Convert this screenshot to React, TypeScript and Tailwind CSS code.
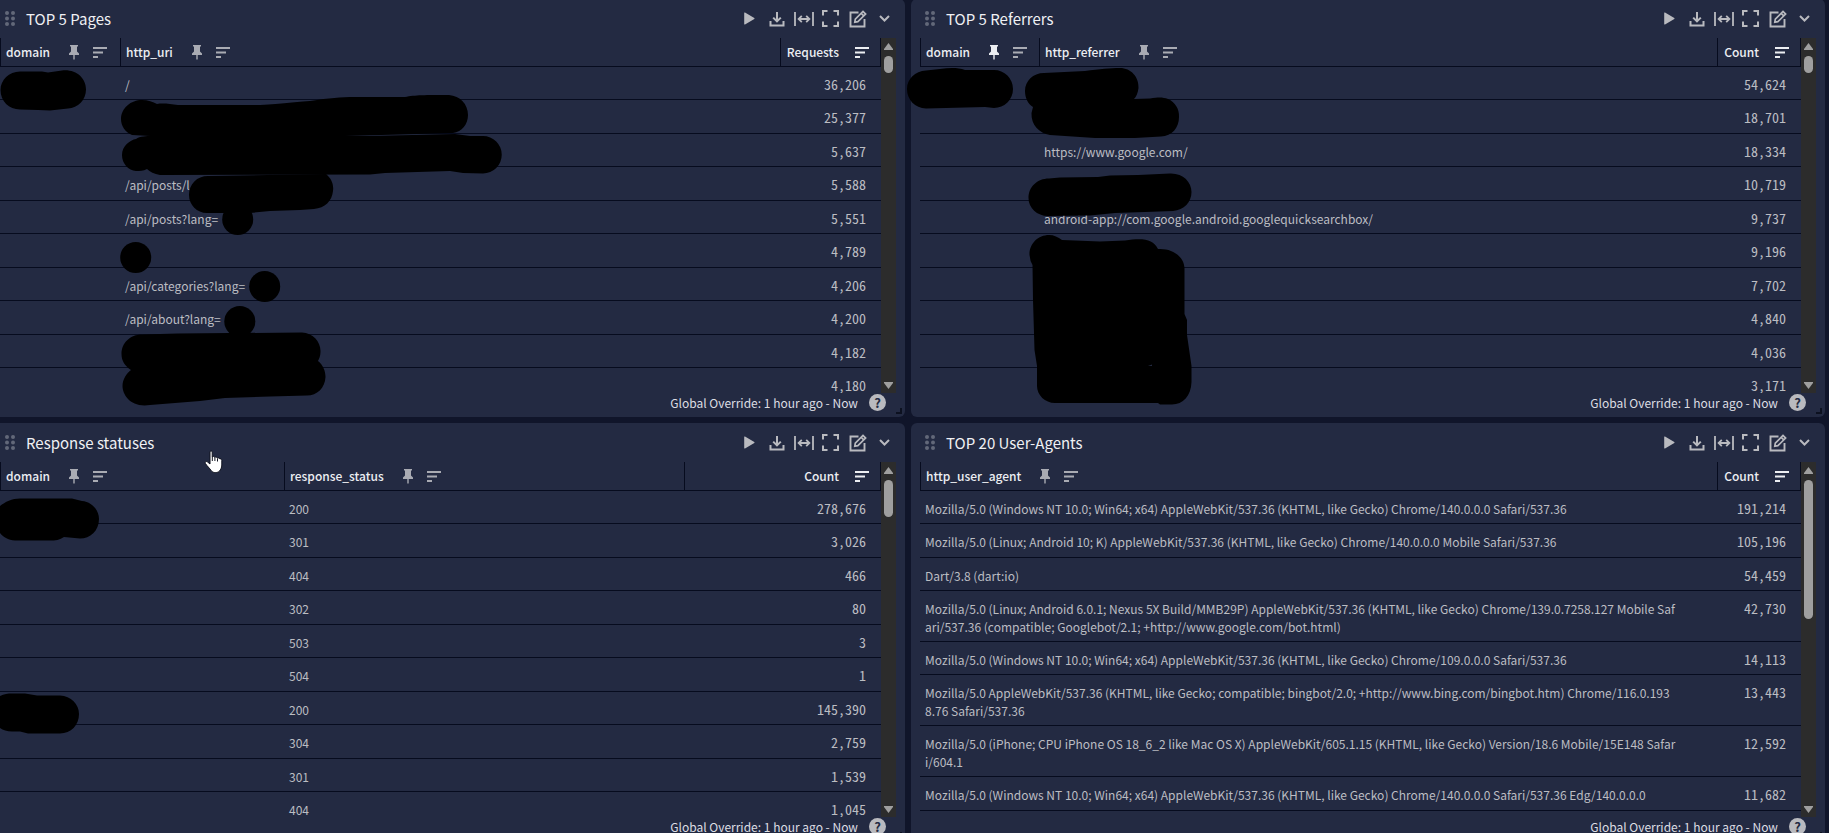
import React from "react";

type Column = { label: string; numeric?: boolean; pinned?: boolean; width?: string };
type PanelProps = {
  title: string;
  columns: Column[];
  rows: string[][];
  thumb: string;
};

const iconButton = "flex h-6 w-[27px] items-center justify-center text-[#b9babf]";

function GripIcon() {
  return (
    <svg width="10" height="15" viewBox="0 0 10 15" fill="#626879" aria-hidden="true">
      <circle cx="2" cy="2" r="2" />
      <circle cx="8" cy="2" r="2" />
      <circle cx="2" cy="7.5" r="2" />
      <circle cx="8" cy="7.5" r="2" />
      <circle cx="2" cy="13" r="2" />
      <circle cx="8" cy="13" r="2" />
    </svg>
  );
}

function PinIcon() {
  return (
    <svg width="10" height="15" viewBox="0 0 10 15" fill="currentColor" aria-hidden="true">
      <path d="M1 0H9V1.5H8V6.5L10 8.5V10H5.7V14L5 15L4.3 14V10H0V8.5L2 6.5V1.5H1Z" />
    </svg>
  );
}

function SortIcon() {
  return (
    <svg width="14" height="11" viewBox="0 0 14 11" fill="currentColor" aria-hidden="true">
      <path d="M0 0H14V2H0ZM0 4.5H10V6.5H0ZM0 9H5V11H0Z" />
    </svg>
  );
}

function Toolbar() {
  return (
    <div className="-mr-0.5 flex shrink-0">
      <button type="button" aria-label="Run" className={iconButton}>
        <svg width="11" height="13" viewBox="0 0 11 13" fill="currentColor">
          <path d="M1 .5 10.3 6.1a.5.5 0 0 1 0 .8L1 12.5a.5.5 0 0 1-.8-.4V.9A.5.5 0 0 1 1 .5Z" />
        </svg>
      </button>
      <button type="button" aria-label="Download" className={iconButton}>
        <svg width="16" height="16" viewBox="0 0 16 16" fill="none" stroke="currentColor" strokeWidth="2">
          <path d="M8 1V10M4.2 6.6 8 10.4 11.8 6.6M1.5 10V14.4H14.5V10" />
        </svg>
      </button>
      <button type="button" aria-label="Fit width" className={iconButton}>
        <svg width="20" height="16" viewBox="0 0 20 16" fill="none" stroke="currentColor" strokeWidth="1.8">
          <path d="M1 1V15M19 1V15M5 8H15M7.8 4.8 4.6 8 7.8 11.2M12.2 4.8 15.4 8 12.2 11.2" />
        </svg>
      </button>
      <button type="button" aria-label="Full screen" className={iconButton}>
        <svg width="17" height="17" viewBox="0 0 17 17" fill="none" stroke="currentColor" strokeWidth="2">
          <path d="M1 5.5V1H5.5M11.5 1H16V5.5M16 11.5V16H11.5M5.5 16H1V11.5" />
        </svg>
      </button>
      <button type="button" aria-label="Edit" className={iconButton}>
        <svg width="18" height="18" viewBox="0 0 18 18" fill="none" stroke="currentColor" strokeWidth="1.9">
          <path d="M9.5 2.5H1.5V16.5H15.5V9" />
          <path d="M5.8 12.2 6.3 9.2 14 1.5 16.6 4.1 8.9 11.7ZM12.2 3.3 14.8 5.9" strokeWidth="1.7" />
        </svg>
      </button>
      <button type="button" aria-label="More" className={iconButton}>
        <svg width="11" height="7" viewBox="0 0 11 7" fill="none" stroke="currentColor" strokeWidth="2">
          <path d="M1 1 5.5 5.5 10 1" />
        </svg>
      </button>
    </div>
  );
}

function Scrollbar({ thumb }: { thumb: string }) {
  return (
    <div className="flex w-[15px] shrink-0 flex-col items-center justify-between bg-[#2c2c2c] pt-[5px] pb-1">
      <div className="flex flex-col items-center gap-[6px]">
        <svg width="9" height="7" viewBox="0 0 9 7" fill="#9f9f9f" aria-hidden="true">
          <path d="M4.5 0 9 6V7H0V6Z" />
        </svg>
        <div className={`w-[9px] rounded-full bg-[#9f9f9f] ${thumb}`} />
      </div>
      <svg width="9" height="7" viewBox="0 0 9 7" fill="#9f9f9f" aria-hidden="true">
        <path d="M4.5 7 9 1V0H0V1Z" />
      </svg>
    </div>
  );
}

function Panel({ title, columns, rows, thumb }: PanelProps) {
  return (
    <section className="relative flex h-[418px] min-w-0 flex-col rounded-md bg-[#232a42] px-[9px]">
      <header className="flex h-[39px] shrink-0 items-center justify-between">
        <div className="flex items-center gap-[11px] pl-[5px]">
          <GripIcon />
          <h2 className="text-[15px] leading-5 text-[#f0f1f4]">{title}</h2>
        </div>
        <Toolbar />
      </header>
      <div className="flex h-[355px] overflow-hidden">
        <div className="min-w-0 flex-1 overflow-hidden">
          <table className="w-full table-fixed border-separate border-spacing-0">
            <thead>
              <tr className="h-[29px]">
                {columns.map((c) => (
                  <th
                    key={c.label}
                    scope="col"
                    className={`border-b border-l border-[#060b1e] p-0 pl-[5px] align-middle font-medium last:border-r ${c.width ?? ""}`}
                  >
                    {c.numeric ? (
                      <div className="flex items-center justify-end gap-4 pr-[11px] text-[#eceef2]">
                        <span className="text-[12px] leading-[18px]">{c.label}</span>
                        <button type="button" aria-label={`Sort by ${c.label}`}>
                          <SortIcon />
                        </button>
                      </div>
                    ) : (
                      <div className="flex items-center text-[#a9abb3]">
                        <span className="text-[12px] leading-[18px] text-[#eceef2]">{c.label}</span>
                        <button
                          type="button"
                          aria-label={`Pin ${c.label}`}
                          className={c.pinned ? "ml-[19px] text-[#eceef2]" : "ml-[19px]"}
                        >
                          <PinIcon />
                        </button>
                        <button type="button" aria-label={`Sort by ${c.label}`} className="ml-[14px]">
                          <SortIcon />
                        </button>
                      </div>
                    )}
                  </th>
                ))}
              </tr>
            </thead>
            <tbody className="text-[#bcbdc2]">
              {rows.map((row, r) => (
                <tr key={r} className="h-[33px] even:h-[34px]">
                  {row.map((cell, i) => (
                    <td
                      key={i}
                      className={
                        columns[i].numeric
                          ? "border-b border-[#060b1e] p-0 pt-2 pr-[15px] text-right align-top font-['Noto_Sans_Mono_CJK_SC','Liberation_Mono',monospace] text-[14px] leading-[18px]"
                          : "border-b border-[#060b1e] p-0 pt-[9px] pr-10 pb-[5px] pl-[5px] align-top text-[12px] leading-[18px] break-all"
                      }
                    >
                      {cell}
                    </td>
                  ))}
                </tr>
              ))}
            </tbody>
          </table>
        </div>
        <Scrollbar thumb={thumb} />
      </div>
      <footer className="flex h-[19px] items-center justify-end gap-[11px] pr-[10px] text-[#dcdde2]">
        <span className="text-[12px] leading-[18px]">Global Override: 1 hour ago - Now</span>
        <button
          type="button"
          aria-label="Help"
          className="flex size-[17px] items-center justify-center rounded-full bg-[#b9babf] text-[13px] leading-[17px] font-bold text-[#232a42]"
        >
          ?
        </button>
      </footer>
      <svg className="absolute right-[3px] bottom-[3px]" width="6" height="6" viewBox="0 0 6 6" aria-hidden="true">
        <path d="M5 0V5H0" fill="none" stroke="#0c1120" strokeWidth="2" />
      </svg>
    </section>
  );
}

const pages = [
  ["", "/", "36,206"],
  ["", "", "25,377"],
  ["", "", "5,637"],
  ["", "/api/posts/l", "5,588"],
  ["", "/api/posts?lang=", "5,551"],
  ["", "", "4,789"],
  ["", "/api/categories?lang=", "4,206"],
  ["", "/api/about?lang=", "4,200"],
  ["", "", "4,182"],
  ["", "", "4,180"],
];

const referrers = [
  ["", "", "54,624"],
  ["", "", "18,701"],
  ["", "https://www.google.com/", "18,334"],
  ["", "", "10,719"],
  ["", "android-app://com.google.android.googlequicksearchbox/", "9,737"],
  ["", "", "9,196"],
  ["", "", "7,702"],
  ["", "", "4,840"],
  ["", "", "4,036"],
  ["", "", "3,171"],
];

const statuses = [
  ["", "200", "278,676"],
  ["", "301", "3,026"],
  ["", "404", "466"],
  ["", "302", "80"],
  ["", "503", "3"],
  ["", "504", "1"],
  ["", "200", "145,390"],
  ["", "304", "2,759"],
  ["", "301", "1,539"],
  ["", "404", "1,045"],
];

const agents = [
  ["Mozilla/5.0 (Windows NT 10.0; Win64; x64) AppleWebKit/537.36 (KHTML, like Gecko) Chrome/140.0.0.0 Safari/537.36", "191,214"],
  ["Mozilla/5.0 (Linux; Android 10; K) AppleWebKit/537.36 (KHTML, like Gecko) Chrome/140.0.0.0 Mobile Safari/537.36", "105,196"],
  ["Dart/3.8 (dart:io)", "54,459"],
  ["Mozilla/5.0 (Linux; Android 6.0.1; Nexus 5X Build/MMB29P) AppleWebKit/537.36 (KHTML, like Gecko) Chrome/139.0.7258.127 Mobile Safari/537.36 (compatible; Googlebot/2.1; +http://www.google.com/bot.html)", "42,730"],
  ["Mozilla/5.0 (Windows NT 10.0; Win64; x64) AppleWebKit/537.36 (KHTML, like Gecko) Chrome/109.0.0.0 Safari/537.36", "14,113"],
  ["Mozilla/5.0 AppleWebKit/537.36 (KHTML, like Gecko; compatible; bingbot/2.0; +http://www.bing.com/bingbot.htm) Chrome/116.0.1938.76 Safari/537.36", "13,443"],
  ["Mozilla/5.0 (iPhone; CPU iPhone OS 18_6_2 like Mac OS X) AppleWebKit/605.1.15 (KHTML, like Gecko) Version/18.6 Mobile/15E148 Safari/604.1", "12,592"],
  ["Mozilla/5.0 (Windows NT 10.0; Win64; x64) AppleWebKit/537.36 (KHTML, like Gecko) Chrome/140.0.0.0 Safari/537.36 Edg/140.0.0.0", "11,682"],
];

/* Hand-drawn marker strokes that hide private hosts and paths. */
function Redactions() {
  return (
    <svg className="pointer-events-none absolute top-0 left-0" width="1829" height="833" viewBox="0 0 1829 833" aria-hidden="true">
      <path d="M.5 90C.5 80 9 71.500 20 71.500L42 71.500L48 72.500L62 70.500C76 69 86 78 86 89.500C86 100 78 108 68 108.500L50 110.500L38 110L20 109.500C9 109.500.5 101 .5 90Z" />
      <path d="M121 119C121 108 131 100 142 100C148 100 153 102 157 104C163 103 170 104 178 105L260 105C285 104 290 102 310 101C330 98 340 97 355 97L405 97C415 95 425 95 449 95C460 96 468 104 468 115C468 124 462 132 453 133L345 136L150 136L132 135C125 132 121 126 121 119Z" />
      <path d="M122 155C122 146 130 140 136 139C140 136 146 136 152 136L370 136L455 134L470 136L483 136A18.500 18.500 0 0 1 483 173.500L463 173L450 171L385 173L370 174.500L160 175C154 174 150 172 147 169C143 171 140 171 136 171A15 16 0 0 1 122 155Z" />
      <path d="M189 195C189 184 197 176 208 176L326 174C331 178 334 184 333 191C332 201 325 208 314 209L300 210L270 211L250 213L207 213C197 213 189 205 189 195Z" />
      <circle cx="237.700" cy="219.500" r="15.500" />
      <circle cx="135.700" cy="257.500" r="15.500" />
      <circle cx="264.700" cy="286.500" r="15.500" />
      <circle cx="239.800" cy="321.500" r="15.500" />
      <path d="M121.500 354C121.500 343 130 334.500 142 334.500L178 333.500L302 332.500C313 333 321 342 320.500 352C320.500 356 319 359 318 361C323 365 325.500 371 325.500 377C325 388 317 395.500 307 395.500L270 396.500L225 398L200 401L150 405C131 408 122.500 395 122.500 386C122.500 379 127 373 131 370C125 366 121.500 361 121.500 354Z" />
      <path d="M907 89C907 79 915 71 926 70.500L940 69C950 67.500 958 67.500 965 70L994 70A19 19 0 0 1 994 108L985 107L926 108.500C915 108 907 100 907 89Z" />
      <path d="M1025 91C1025 81 1033 73 1044 73L1085 71C1100 69 1110 68 1120 68C1131 68 1139 77 1138.500 88C1138 93 1136 97 1134 99L1150 98.500C1160 97 1163 97.500 1168 99C1175 102 1179.500 109 1179 117C1179 128 1172 136 1161 136.500L1135 138L1095 138L1050 135C1039 133 1031 125 1031.500 113L1033 107C1028 104 1025 98 1025 91Z" />
      <path d="M1028.500 198C1028.500 187 1037 178.500 1049 178.500L1060 177.500L1098 177L1110 175.500L1138 175L1170 173.500C1183 173 1191.500 182 1191.500 192C1191.500 202 1184 210 1173 211L1145 212L1115 213L1090 215.500L1048 216C1037 216 1028.500 208 1028.500 198Z" />
      <path d="M1029.500 255C1029 244 1038 235 1049 235C1054 235 1058 237 1062 240L1100 241.500L1125 240.500C1143 238 1153 239 1158 249C1173 248 1184 257 1184.500 268L1184.500 314L1187 320L1187 335L1191.500 366L1191.500 382C1191 396 1183 404.500 1172 404.500L1160 404.500L1158 403L1055 403C1045 403 1037 395 1037 386L1037 366L1034.500 350L1033 300L1032.500 265Q1030 261 1029.500 255Z" />
      <path d="M1148 366 1152 364.500V366Z" fill="#232a42" />
      <path d="M0 506C5 502 12 498.500 20 498.500L72 498.500L82 501C92 502 99 510 99 519C99 531 90 538.500 80 538.500L64 537C60 540 55 540.500 50 540.500L15 540.500C8 540 3 537 0 533Z" />
      <path d="M0 696C4 694 8 693.500 12 693.500L25 693.500L37 695.500L60 695.500C71 696 79 704 79 714C79 725 71 733.500 60 733.500L28 733.500L20 731.500L12 731.500C7 731.500 3 730 0 728Z" />
    </svg>
  );
}

function HandCursor() {
  return (
    <svg className="pointer-events-none absolute top-[450px] left-[204px]" width="19" height="24" viewBox="0 0 19 24" aria-hidden="true">
      <path
        d="M6 2C6 .6 8.200.6 8.200 2V7C8.800 6 10.600 6.200 10.700 7.600C11.500 6.700 13.200 7 13.400 8.400C14.300 7.600 15.500 7.900 15.900 9C16.900 8.600 17.800 9.200 17.800 10.400V15C17.800 18 16.500 19.500 15.600 21C14 23 9 23.200 7.500 21C5.500 18 3 16 1.400 13.500C.6 12 2.400 10.800 3.600 12L6 14Z"
        fill="#fff"
        stroke="#10131f"
        strokeWidth="1"
      />
      <path d="M8.300 7V11M10.900 8V11M13.500 9V11.500" stroke="#10131f" strokeWidth="1" />
    </svg>
  );
}

export default function App() {
  return (
    <main className="relative h-screen overflow-hidden bg-[#10152a] font-['Noto_Sans_CJK_SC',sans-serif]">
      <div className="-mt-px -ml-[9px] grid grid-cols-2 gap-[6px] pr-1">
        <Panel
          title="TOP 5 Pages"
          columns={[
            { label: "domain", width: "w-[120px]" },
            { label: "http_uri" },
            { label: "Requests", numeric: true, width: "w-[101px]" },
          ]}
          rows={pages}
          thumb="h-[17px]"
        />
        <Panel
          title="TOP 5 Referrers"
          columns={[
            { label: "domain", pinned: true, width: "w-[119px]" },
            { label: "http_referrer" },
            { label: "Count", numeric: true, width: "w-[84px]" },
          ]}
          rows={referrers}
          thumb="h-[17px]"
        />
        <Panel
          title="Response statuses"
          columns={[
            { label: "domain", width: "w-[284px]" },
            { label: "response_status" },
            { label: "Count", numeric: true, width: "w-[197px]" },
          ]}
          rows={statuses}
          thumb="h-[37px]"
        />
        <Panel
          title="TOP 20 User-Agents"
          columns={[
            { label: "http_user_agent" },
            { label: "Count", numeric: true, width: "w-[84px]" },
          ]}
          rows={agents}
          thumb="h-[139px]"
        />
      </div>
      <Redactions />
      <HandCursor />
    </main>
  );
}
